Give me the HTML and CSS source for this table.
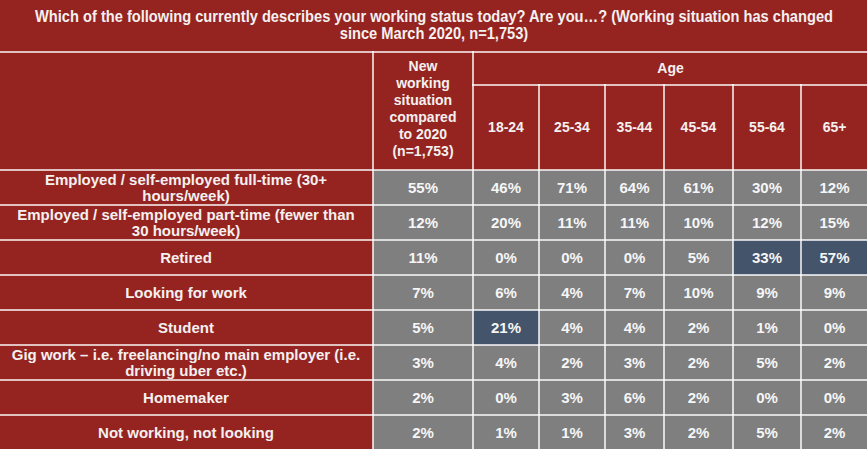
FILE: index.html
```html
<!DOCTYPE html>
<html lang="en">
<head>
<meta charset="utf-8">
<title>Working status</title>
<link rel="stylesheet" href="styles.css">
</head>
<body>
<div class="page">
  <div class="title">
    <div class="title-text">Which of the following currently describes your working status today? Are you…? (Working situation has changed<br>since March 2020, n=1,753)</div>
  </div>
  <table class="grid">
    <colgroup>
      <col class="c-label">
      <col class="c-new">
      <col class="c-a1">
      <col class="c-a2">
      <col class="c-a3">
      <col class="c-a4">
      <col class="c-a5">
      <col class="c-a6">
    </colgroup>
    <thead>
      <tr class="h1">
        <th rowspan="2" class="first"></th>
        <th rowspan="2" class="newhead">New<br>working<br>situation<br>compared<br>to 2020<br>(n=1,753)</th>
        <th colspan="6">Age</th>
      </tr>
      <tr class="h2">
        <th>18-24</th><th>25-34</th><th>35-44</th><th>45-54</th><th>55-64</th><th>65+</th>
      </tr>
    </thead>
    <tbody>
      <tr><th class="first">Employed / self-employed full-time (30+<br>hours/week)</th><td>55%</td><td>46%</td><td>71%</td><td>64%</td><td>61%</td><td>30%</td><td>12%</td></tr>
      <tr><th class="first">Employed / self-employed part-time (fewer than<br>30 hours/week)</th><td>12%</td><td>20%</td><td>11%</td><td>11%</td><td>10%</td><td>12%</td><td>15%</td></tr>
      <tr><th class="first">Retired</th><td>11%</td><td>0%</td><td>0%</td><td>0%</td><td>5%</td><td class="hi">33%</td><td class="hi">57%</td></tr>
      <tr><th class="first">Looking for work</th><td>7%</td><td>6%</td><td>4%</td><td>7%</td><td>10%</td><td>9%</td><td>9%</td></tr>
      <tr><th class="first">Student</th><td>5%</td><td class="hi">21%</td><td>4%</td><td>4%</td><td>2%</td><td>1%</td><td>0%</td></tr>
      <tr><th class="first">Gig work – i.e. freelancing/no main employer (i.e.<br>driving uber etc.)</th><td>3%</td><td>4%</td><td>2%</td><td>3%</td><td>2%</td><td>5%</td><td>2%</td></tr>
      <tr><th class="first">Homemaker</th><td>2%</td><td>0%</td><td>3%</td><td>6%</td><td>2%</td><td>0%</td><td>0%</td></tr>
      <tr><th class="first">Not working, not looking</th><td>2%</td><td>1%</td><td>1%</td><td>3%</td><td>2%</td><td>5%</td><td>2%</td></tr>
    </tbody>
  </table>
</div>
</body>
</html>
```
FILE: styles.css
```css
html, body {
  margin: 0;
  padding: 0;
  background: #952421;
}
.page {
  width: 867px;
  height: 449px;
  overflow: hidden;
  font-family: "Liberation Sans", Arial, sans-serif;
  color: #f4f0ef;
}
.title {
  height: 51px;
  display: flex;
  justify-content: center;
  overflow: visible;
}
.title-text {
  flex-shrink: 0;
  width: 1040px;
  padding-top: 8px;
  font-size: 16px;
  line-height: 17px;
  font-weight: bold;
  text-align: center;
  transform: scaleX(0.915);
}
.grid {
  border-collapse: collapse;
  table-layout: fixed;
  width: 868px;
  font-size: 14px;
  font-weight: bold;
}
.c-label { width: 373px; }
.c-new { width: 100px; }
.c-a1 { width: 66px; }
.c-a2 { width: 66px; }
.c-a3 { width: 59px; }
.c-a4 { width: 69px; }
.c-a5 { width: 68px; }
.c-a6 { width: 67px; }
.grid th, .grid td {
  border: 2px solid rgba(255, 255, 255, 0.72);
  padding: 0;
  text-align: center;
  vertical-align: middle;
}
.grid th.first {
  border-left: none;
}
.grid thead th {
  line-height: 17px;
  font-size: 14px;
}
.grid .h1 { height: 33px; }
.grid .h2 { height: 85px; }
.newhead {
  vertical-align: top !important;
  padding-top: 5px !important;
}
.grid tbody tr { height: 35px; }
.grid tbody th {
  line-height: 16px;
  font-size: 15px;
}
.grid td {
  background: #7f7f7f;
  color: #f6f6f6;
  font-size: 15px;
  line-height: 16px;
}
.grid td.hi {
  background: #44546a;
}
```
